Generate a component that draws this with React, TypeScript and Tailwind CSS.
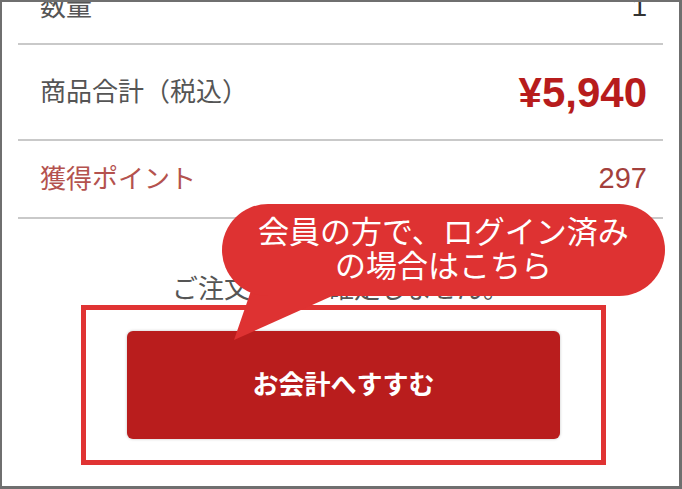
export default function App() {
  return (
    <div
      className="relative w-[682px] h-[489px] overflow-hidden bg-white border-t-2 border-l-2 border-r-[3px] border-b-[3px] border-[#6f6f6f]"
      style={{ fontFamily: '"Liberation Sans", "Noto Sans CJK JP", sans-serif' }}
    >
      <div className="px-4">
        {/* quantity row, mostly scrolled out */}
        <div className="flex justify-between items-start h-[54px] -mt-[11px] border-b-2 border-[#c9c9c9] pl-[22px] pr-[16px]">
          <span className="text-[26px] leading-[32px] text-[#555]">数量</span>
          <span className="text-[28px] leading-[32px] text-[#333]">1</span>
        </div>

        <div className="flex justify-between items-center h-[96px] border-b-2 border-[#c9c9c9] pl-[22px] pr-[16px]">
          <span className="text-[26px] text-[#555]">商品合計（税込）</span>
          <span className="text-[42px] font-bold text-[#b71c1c]">¥5,940</span>
        </div>

        <div className="flex justify-between items-center h-[78px] border-b-2 border-[#c9c9c9] pl-[22px] pr-[16px]">
          <span className="text-[26px] text-[#b4524e]">獲得ポイント</span>
          <span className="text-[29px] text-[#a3403c]">297</span>
        </div>

        <p className="mt-[54px] text-center text-[26px] leading-[32px] text-[#555]">
          ご注文はまだ確定しません。
        </p>

        <div className="ml-[63px] w-[525px] h-[160px] border-[5px] border-[#e03333] px-[41px] pt-[21px]">
          <button className="w-full h-[108px] rounded-[6px] bg-[#b91d1d] text-white text-[26px] font-bold shadow-[0_0_3px_rgba(0,0,0,0.25)]">
            お会計へすすむ
          </button>
        </div>
      </div>

      {/* speech bubble annotation */}
      <svg
        className="absolute left-0 top-0"
        width="682"
        height="489"
        viewBox="0 0 682 489"
      >
        <path d="M252 280 L232 338 L348 286 Z" fill="#de3232" />
      </svg>
      <div className="absolute left-[220px] top-[202px] w-[443px] h-[92px] rounded-full bg-[#de3232] flex flex-col items-center justify-center text-white text-[31px] leading-[34px]">
        <span>会員の方で、ログイン済み</span>
        <span>の場合はこちら</span>
      </div>
    </div>
  );
}
